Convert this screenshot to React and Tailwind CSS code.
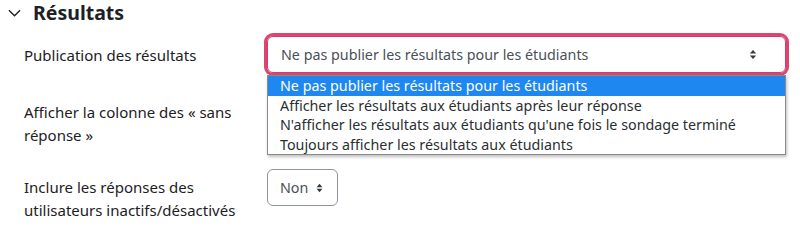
import React from "react";

const font = { fontFamily: '"Noto Sans", "Open Sans", sans-serif' };

function Arrows({ className }) {
  return (
    <svg viewBox="0 0 8 12" className={className} fill="#343a40">
      <path d="M4 1 L7.5 5 H0.5 Z" />
      <path d="M4 11 L7.5 7 H0.5 Z" />
    </svg>
  );
}

const options = [
  "Ne pas publier les résultats pour les étudiants",
  "Afficher les résultats aux étudiants après leur réponse",
  "N'afficher les résultats aux étudiants qu'une fois le sondage terminé",
  "Toujours afficher les résultats aux étudiants",
];

export default function App() {
  return (
    <div className="w-[800px] h-[234px] bg-white text-[#1d2125] overflow-hidden" style={font}>
      <div className="flex items-center h-[26px] pl-[8px]">
        <svg viewBox="0 0 14 8" className="w-[13px] h-[8px]" fill="none" stroke="#1d2125" strokeWidth="1.5">
          <path d="M1 1 L7 7 L13 1" />
        </svg>
        <h3 className="ml-[12px] text-[19.5px] font-bold leading-none">Résultats</h3>
      </div>

      <div className="pl-[24px] mt-[10px]">
        {/* row 1 */}
        <div className="flex">
          <div className="w-[243px] pt-[8px] text-[15px] leading-[22px]">Publication des résultats</div>
          <div className="relative">
            <div className="w-[519px] h-[37px] flex items-center justify-between pl-[13px] pr-[28px] rounded-[6px] border border-[#d43a6b] text-[14.3px] text-[#495057] shadow-[0_0_0_3px_#d9476f]">
              <span>{options[0]}</span>
              <Arrows className="w-[8px] h-[11px]" />
            </div>
            <div className="absolute left-0 top-[39px] z-10 w-[519px] bg-white border border-[#8a8a8a] shadow-[1px_2px_3px_rgba(0,0,0,0.25)] text-[14.3px] text-[#2b2f33]">
              {options.map((o, i) => (
                <div
                  key={o}
                  className={
                    "h-[19.5px] leading-[19.5px] pl-[12px] " +
                    (i === 0 ? "bg-[#1e87f0] text-white" : "")
                  }
                >
                  {o}
                </div>
              ))}
            </div>
          </div>
        </div>

        {/* row 2 */}
        <div className="flex mt-[21px]">
          <div className="w-[230px] pt-[7px] text-[15px] leading-[22.5px]">
            Afficher la colonne des « sans réponse »
          </div>
          <div className="ml-[13px] w-[71px] h-[37px] rounded-[6px] border border-[#8f959e]" />
        </div>

        {/* row 3 */}
        <div className="flex mt-[23px]">
          <div className="w-[230px] pt-[7px] text-[15px] leading-[23px]">
            Inclure les réponses des utilisateurs inactifs/désactivés
          </div>
          <div className="ml-[13px] w-[71px] h-[37px] flex items-center justify-between pl-[12px] pr-[14px] rounded-[6px] border border-[#8f959e] text-[14.3px] text-[#495057]">
            <span>Non</span>
            <Arrows className="w-[7px] h-[10px]" />
          </div>
        </div>
      </div>
    </div>
  );
}
